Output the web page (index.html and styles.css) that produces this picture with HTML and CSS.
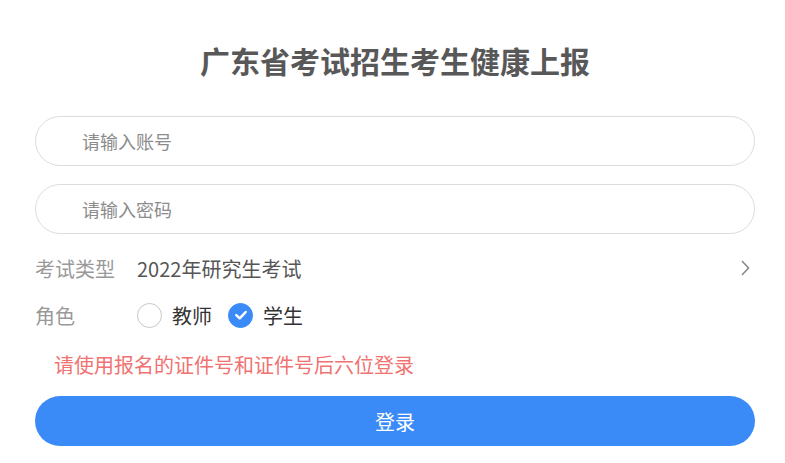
FILE: index.html
```html
<!DOCTYPE html>
<html lang="zh-CN">
    <head>
        <meta charset="utf-8"/>
        <title>广东省考试招生考生健康上报</title>
        <link rel="stylesheet" href="styles.css">
    </head>
    <body>
        <div id="loginBox">
            <h1>广东省考试招生考生健康上报</h1>

            <!-- Account and password -->
            <div class="field">
                <input type="text" placeholder="请输入账号">
            </div>
            <div class="field">
                <input type="password" placeholder="请输入密码">
            </div>

            <!-- Exam type -->
            <div class="row">
                <span class="label">考试类型</span>
                <span class="value">2022年研究生考试</span>
                <svg class="arrow" width="10" height="18" viewBox="0 0 10 18">
                    <path d="M2 2 L8.5 9 L2 16" fill="none" stroke="#8a8a8a" stroke-width="1.6"/>
                </svg>
            </div>

            <!-- Role -->
            <div class="row">
                <span class="label">角色</span>
                <div class="radios">
                    <label class="radio">
                        <span class="circle"></span>教师
                    </label>
                    <label class="radio">
                        <span class="circle checked">
                            <svg width="14" height="14" viewBox="0 0 14 14">
                                <path d="M2.3 7.2 L5.7 10.3 L11.7 4" fill="none" stroke="#fff" stroke-width="2.5" stroke-linecap="round" stroke-linejoin="round"/>
                            </svg>
                        </span>学生
                    </label>
                </div>
            </div>

            <p class="tip">请使用报名的证件号和证件号后六位登录</p>

            <button id="loginButton">登录</button>
        </div>
    </body>
</html>
```

FILE: styles.css
```css
body{
    margin: 0px;
    background-color: #fff;
    font-family: "Microsoft YaHei", "Noto Sans CJK SC", sans-serif;
}

#loginBox{
    padding: 40px 30px 0 35px;
}

h1{
    color: #585858;
    font-size: 30px;
    font-weight: bold;
    text-align: center;
    line-height: 40px;
    height: 40px;
    margin: 0 0 36px 0;
}

.field{
    margin-bottom: 18px;
}

.field input{
    box-sizing: border-box;
    width: 100%;
    height: 50px;
    border: 1px solid #dcdcdc;
    border-radius: 25px;
    padding-left: 46px;
    font-size: 18px;
    font-family: inherit;
    color: #333;
    outline: none;
}

.field input::placeholder{
    color: #8c8c8c;
}

.row{
    display: flex;
    align-items: center;
    height: 40px;
    margin-bottom: 7px;
}

.field + .row{
    margin-top: -4px;
}

.label{
    width: 102px;
    font-size: 20px;
    color: #999;
}

.value{
    flex: 1;
    font-size: 20px;
    color: #555;
}

.arrow{
    margin-right: 5px;
}

.radios{
    display: flex;
    align-items: center;
}

.radio{
    display: flex;
    align-items: center;
    font-size: 20px;
    color: #333;
    margin-right: 16px;
}

.circle{
    box-sizing: border-box;
    width: 25px;
    height: 25px;
    border: 1px solid #c8c8c8;
    border-radius: 50%;
    margin-right: 10px;
    display: flex;
    align-items: center;
    justify-content: center;
}

.circle.checked{
    background-color: #3a8bf8;
    border-color: #3a8bf8;
}

.tip{
    color: #f07272;
    font-size: 20px;
    line-height: 30px;
    margin: 15px 0 16px 0;
    padding-left: 19px;
}

#loginButton{
    display: block;
    width: 100%;
    height: 50px;
    border: none;
    border-radius: 25px;
    background-color: #3a8bf8;
    color: #fff;
    font-size: 20px;
    font-family: inherit;
}
```
